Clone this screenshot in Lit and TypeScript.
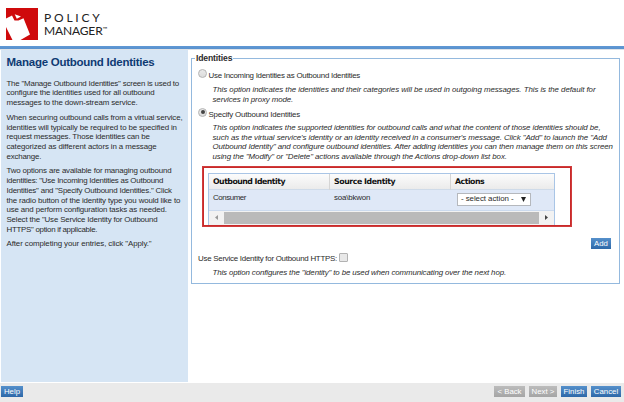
import { LitElement, html, css, svg } from "lit";
import { customElement, property } from "lit/decorators.js";

type Row = [text: string, width: number];

const intro: Row[][] = [
  [
    ['The "Manage Outbound Identities" screen is used to', 172.5],
    ["configure the identities used for all outbound", 148],
    ["messages to the down-stream service.", 131],
  ],
  [
    ["When securing outbound calls from a virtual service,", 176],
    ["identities will typically be required to be specified in", 170.3],
    ["request messages. Those identities can be", 143.3],
    ["categorized as different actors in a message", 150],
    ["exchange.", 34.7],
  ],
  [
    ["Two options are available for managing outbound", 165],
    ['identities: "Use Incoming Identities as Outbound', 156.7],
    ['Identities" and "Specify Outbound Identities." Click', 165.2],
    ["the radio button of the identity type you would like to", 173.7],
    ["use and perform configuration tasks as needed.", 160.2],
    ['Select the "Use Service Identity for Outbound', 151],
    ['HTTPS" option if applicable.', 90.7],
  ],
  [['After completing your entries, click "Apply."', 145]],
];

const incomingHelp: Row[] = [
  ["This option indicates the identities and their categories will be used in outgoing messages. This is the default for", 383],
  ["services in proxy mode.", 80.7],
];

const specifyHelp: Row[] = [
  ["This option indicates the supported identities for outbound calls and what the content of those identities should be,", 388],
  ['such as the virtual service\'s identity or an identity received in a consumer\'s message. Click "Add" to launch the "Add', 394.3],
  ['Outbound Identity" and configure outbound identities. After adding identities you can then manage them on this screen', 400.3],
  ['using the "Modify" or "Delete" actions available through the Actions drop-down list box.', 294.4],
];

const httpsHelp: Row[] = [
  ['This option configures the "identity" to be used when communicating over the next hop.', 293.5],
];

/** One line of text, tracked so that it spans exactly `width` pixels. */
@customElement("text-line")
export class TextLine extends LitElement {
  static styles = css`
    :host { display: block; white-space: nowrap; }
    span { display: inline-block; }
  `;

  @property() text = "";
  @property({ type: Number }) width = 0;

  render() {
    return html`<span>${this.text}</span>`;
  }

  updated() {
    const span = this.renderRoot.querySelector("span")!;
    span.style.letterSpacing = "0";
    const natural = span.getBoundingClientRect().width;
    span.style.letterSpacing = `${(this.width - natural) / this.text.length}px`;
  }
}

const line = (text: string, width: number) =>
  html`<text-line .text=${text} .width=${width}></text-line>`;
const lines = (rows: Row[]) => rows.map(([text, width]) => line(text, width));

@customElement("app-root")
export class AppRoot extends LitElement {
  static styles = css`
    :host {
      display: flex;
      flex-direction: column;
      width: 624px;
      height: 402px;
      overflow: hidden;
      background: #fff;
      color: #2b2b2b;
      font: 7.9px/9.68px "Liberation Sans", Arial, sans-serif;
    }
    * { box-sizing: border-box; }
    header {
      height: 50px;
      flex: none;
      display: flex;
      padding: 8px 0 0 6px;
      border-bottom: 1px solid #dfe3e8;
      background: linear-gradient(#5f98d5, #5a92cd) 0 46px / 100% 3px no-repeat;
    }
    .logo { width: 32px; height: 32px; flex: none; }
    .brand {
      margin: 2.5px 0 0 6px;
      color: #222;
      font: 12px/13px Lato, sans-serif;
      white-space: nowrap;
    }
    .policy { letter-spacing: 2.8px; }
    .manager { letter-spacing: -0.15px; display: flex; }
    .tm { font-size: 6px; line-height: 8px; padding-top: 1px; letter-spacing: 0; }
    main { flex: 1; display: flex; min-height: 0; }
    aside {
      width: 187px;
      margin-left: 1px;
      height: 332px;
      padding: 6px 0 0 5.5px;
      background: #d6e5f4;
      flex: none;
    }
    h1 {
      margin: 0 0 9.8px;
      font-size: 11.5px;
      line-height: 13px;
      color: #0e3a73;
    }
    .para { margin-bottom: 5.1px; }
    .group {
      position: relative;
      width: 429px;
      height: 226px;
      margin: 8px 0 0 3px;
      border: 1px solid #94b9de;
      flex: none;
    }
    .legend {
      position: absolute;
      left: 3px;
      top: -6px;
      padding: 0 1px;
      background: #fff;
      font-weight: bold;
      font-size: 8.6px;
      line-height: 11px;
    }
    .choice { display: flex; height: 10px; padding-left: 6px; }
    .first { margin-top: 10px; }
    .second { margin-top: 3.6px; }
    .radio {
      width: 9px;
      height: 9px;
      border: 1px solid #b4b4b4;
      border-radius: 50%;
      background: linear-gradient(#e9e9e9, #dcdcdc);
      display: grid;
      place-items: center;
      margin-right: 1.5px;
    }
    .dot { width: 4px; height: 4px; border-radius: 50%; background: #444; }
    .choice text-line { padding-top: 2px; }
    .help { font-style: italic; padding-left: 20.5px; }
    .h1 { margin-top: 6px; }
    .h2 { margin-top: 5px; }
    .h3 { margin-top: 5.5px; }
    .frame {
      width: 368px;
      height: 59px;
      margin: 5px 0 0 11px;
      border: 1px solid #c92a2a;
      outline: 1px solid #d03c3c;
      padding: 5px 0 0 4px;
    }
    .table {
      width: 347px;
      border: 1px solid #a9c5e6;
      border-bottom: 0;
    }
    .row { display: grid; grid-template-columns: 121px 121px 1fr; }
    .head {
      height: 16px;
      background: linear-gradient(#fcfcfc, #ebebeb);
      border-bottom: 1px solid #cfdbe9;
      color: #111;
      font: bold 7.8px/16px "DejaVu Sans", sans-serif;
    }
    .head .cell { border-right: 1px solid #d5d5d5; }
    .head .cell:last-child { border: 0; }
    .cell { padding-left: 4px; }
    .data { height: 21px; background: #dfe8f7; padding-top: 3px; border-bottom: 1px solid #cbdaee; }
    .select {
      width: 74px;
      height: 13px;
      margin-left: 2px;
      display: flex;
      align-items: center;
      justify-content: space-between;
      padding: 0 4px 0 3px;
      background: #fff;
      border: 1px solid #b5b8bd;
    }
    .arrow { width: 5px; height: 5px; }
    .scroll { height: 14px; display: flex; align-items: center; background: #f2f2f2; }
    .track { flex: 1; height: 12px; background: #bababa; }
    .end { width: 15px; display: grid; place-items: center; }
    .right { display: flex; justify-content: flex-end; padding: 12px 8px 0 0; }
    .btn {
      height: 11px;
      background: linear-gradient(#5590cb, #2e68a8);
      color: #fff;
      text-align: center;
      line-height: 11px;
      font-size: 7.8px;
      white-space: nowrap;
    }
    .btn.off { background: linear-gradient(#bcbcbc, #a5a5a5); }
    .https { display: flex; padding-left: 6px; margin-top: 4px; height: 10px; }
    .https text-line { padding-top: 1px; }
    .box { width: 9px; height: 9px; border: 1px solid #b2b2b2; border-radius: 1px; background: #e8e8e8; margin-left: 2px; }
    footer {
      height: 19px;
      flex: none;
      display: flex;
      background: #eaeaea;
      padding: 3px 3px 0 1px;
      gap: 4px;
    }
    .w20 { width: 20px; } .w22 { width: 22px; margin-right: auto; } .w26 { width: 26px; }
    .w28 { width: 28px; } .w30 { width: 30px; } .w31 { width: 31px; }
  `;

  render() {
    return html`
      <header>
        <svg class="logo" viewBox="0 0 32 32">
          ${svg`<rect width="32" height="32" fill="#cf0a0c"/>
          <path fill="#fff" d="M0 10.5L6 7.5L8.5 12.5L12.5 12.5L17.5 10.3L24 26.5L14.5 32H6.5L0 19Z M8.7 6.3L15 8.5L10.8 10.8Z"/>`}
        </svg>
        <div class="brand">
          <div class="policy">POLICY</div>
          <div class="manager">MANAGER<span class="tm">™</span></div>
        </div>
      </header>
      <main>
        <aside>
          <h1>${line("Manage Outbound Identities", 148)}</h1>
          ${intro.map((p) => html`<div class="para">${lines(p)}</div>`)}
        </aside>
        <section class="group">
          <div class="legend">${line("Identities", 36.3)}</div>
          <div class="choice first"><span class="radio"></span>${line("Use Incoming Identities as Outbound Identities", 151.5)}</div>
          <div class="help h1">${lines(incomingHelp)}</div>
          <div class="choice second"><span class="radio"><i class="dot"></i></span>${line("Specify Outbound Identities", 91.5)}</div>
          <div class="help h2">${lines(specifyHelp)}</div>
          <div class="frame">
            <div class="table">
              <div class="row head">
                <div class="cell">${line("Outbound Identity", 72)}</div>
                <div class="cell">${line("Source Identity", 61.3)}</div>
                <div class="cell">${line("Actions", 29.2)}</div>
              </div>
              <div class="row data">
                <div class="cell">${line("Consumer", 33)}</div>
                <div class="cell">${line("soa\\bkwon", 36.3)}</div>
                <div class="cell"><div class="select">${line("- select action -", 52.5)}<svg class="arrow" viewBox="0 0 5 5"><path d="M0 0H5L2.5 5Z" fill="#222"/></svg></div></div>
              </div>
              <div class="scroll">
                <span class="end"><svg width="3" height="5"><path d="M3 0V5L0 2.5Z" fill="#999"/></svg></span>
                <span class="track"></span>
                <span class="end"><svg width="3" height="5"><path d="M0 0V5L3 2.5Z" fill="#444"/></svg></span>
              </div>
            </div>
          </div>
          <div class="right"><div class="btn w20">Add</div></div>
          <div class="https">${line("Use Service Identity for Outbound HTTPS:", 139)}<span class="box"></span></div>
          <div class="help h3">${lines(httpsHelp)}</div>
        </section>
      </main>
      <footer>
        <div class="btn w22">Help</div>
        <div class="btn off w31">&lt; Back</div>
        <div class="btn off w28">Next &gt;</div>
        <div class="btn w26">Finish</div>
        <div class="btn w30">Cancel</div>
      </footer>
    `;
  }
}
